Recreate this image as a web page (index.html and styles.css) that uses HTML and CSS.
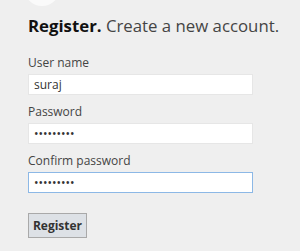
FILE: index.html
```html
<!DOCTYPE html>
<html>
<head>
    <title>Register</title>
    <link rel="stylesheet" href="styles.css">
</head>
<body>
    <div class="logo"></div>
    <div class="page">
        <h2 class="title"><strong>Register.</strong> Create a new account.</h2>
        <form class="form">
            <label for="userName">User name</label>
            <input type="text" id="userName" value="suraj">
            <label for="password">Password</label>
            <input type="password" id="password" value="123456789">
            <label for="confirm">Confirm password</label>
            <input type="password" id="confirm" class="focus" value="123456789">
            <button type="button" class="btn">Register</button>
        </form>
    </div>
</body>
</html>
```
FILE: styles.css
```css
body {
    margin: 0;
    background: #efefef;
    font-family: 'Open Sans', sans-serif;
    color: #444;
    overflow: hidden;
}
.logo {
    position: absolute;
    left: 24px;
    top: -30px;
    width: 36px;
    height: 36px;
    border-radius: 50%;
    background: #fafafa;
}
.page {
    padding: 14px 0 0 28px;
}
.title {
    margin: 0 0 18px 0;
    font-size: 16.8px;
    line-height: 23px;
    font-weight: normal;
    color: #444;
}
.title strong {
    color: #111;
    font-weight: bold;
}
.form {
    display: flex;
    flex-direction: column;
    align-items: flex-start;
}
label {
    font-size: 12px;
    line-height: 16px;
    color: #444;
    margin-bottom: 3px;
}
input {
    box-sizing: border-box;
    width: 225px;
    height: 21px;
    padding: 0 5px;
    margin-bottom: 9px;
    border: 1px solid #e6e6e6;
    background: white;
    font-family: 'Open Sans', sans-serif;
    font-size: 12px;
    color: #333;
    outline: none;
}
input.focus {
    border-color: #8cb8e6;
}
.btn {
    margin-top: 11px;
    width: 59px;
    height: 25px;
    background: #dde1e6;
    border: 1px solid #a9a9a9;
    font-family: 'Open Sans', sans-serif;
    font-weight: bold;
    font-size: 12px;
    color: #333;
    padding: 0;
}
```
